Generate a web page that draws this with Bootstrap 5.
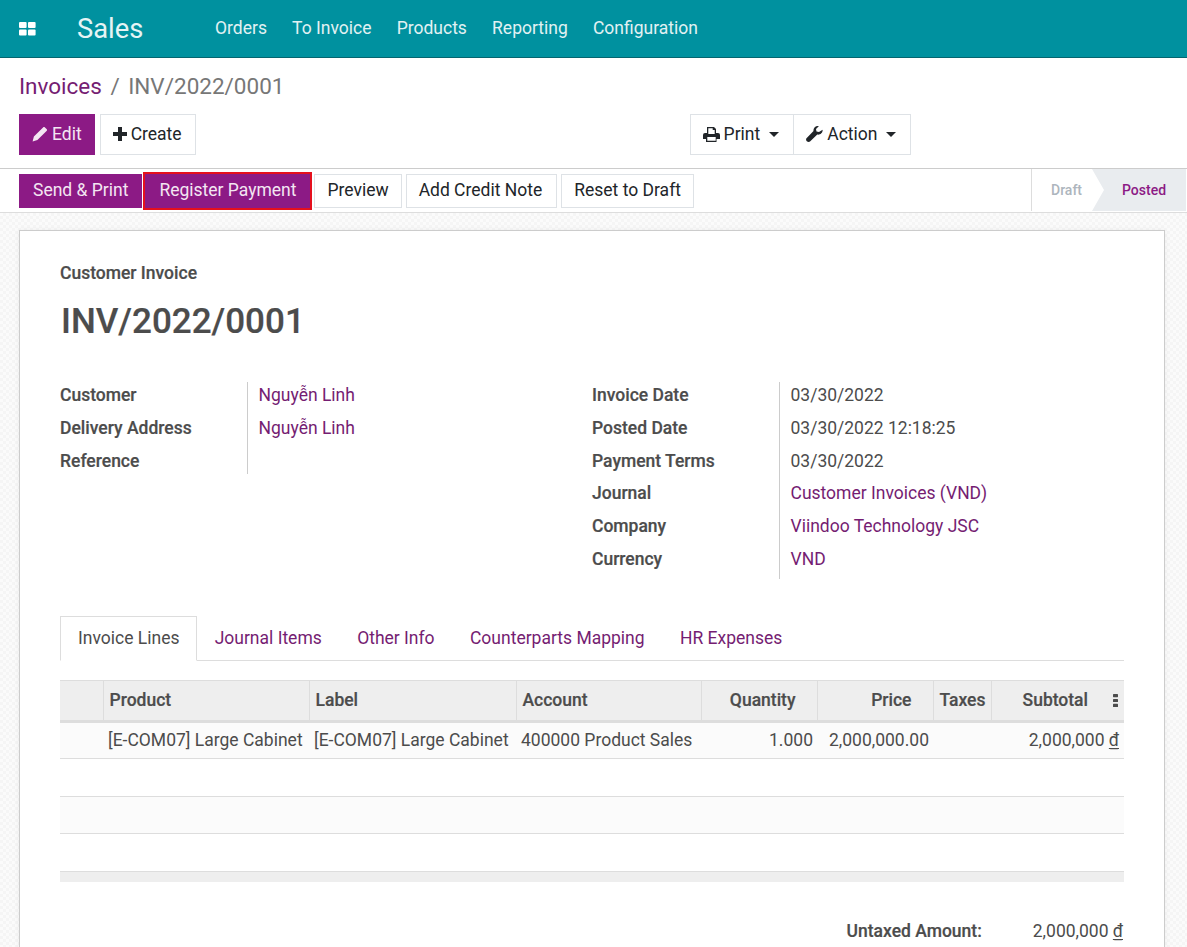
<!DOCTYPE html>
<html lang="en"><head><meta charset="utf-8"><title>INV/2022/0001</title>
<link rel="stylesheet" href="https://cdn.jsdelivr.net/npm/bootstrap@5.3.0/dist/css/bootstrap.min.css">
<style>
html,body{height:947px;overflow:hidden}
body{font-family:Roboto,"Liberation Sans",sans-serif;font-size:17.5px;line-height:1.5;color:#4c4c4c;background:#fff}
a{color:#751d72;text-decoration:none}
.topbar{height:58px;background:#00919f;border-bottom:1px solid #05656f;color:#fff;padding-left:19px}
.appname{font-size:27.3px;margin-left:41px;width:138px;color:#e6f4f5;padding-top:1px}
.topbar .menu-item{color:#e2f1f3;margin-right:25.2px}
.crumbs{font-size:22.5px;line-height:28px;padding:14px 19px 0;color:#777}
.crumbs .sep{margin:0 8.500px}
.btnrow{padding:14px 19px 13px;height:68px}
.xbtn{font-size:17.5px;line-height:24px;border-radius:0;padding:7px 12px 8px;background:#fff;border:1px solid #dee2e6;color:#212529;white-space:nowrap;display:inline-flex;align-items:center;gap:4px}
.xbtn.prim{background:#8c1a85;border-color:#8c1a85;color:#f3e6f2}
.xbtn svg{flex:none}
.createx{margin-left:1px;padding-right:13px}
.printgrp{margin-left:494px}
.printgrp .xbtn+.xbtn{margin-left:-1px}
.caretx{display:inline-block;width:0;height:0;border-top:5px solid #212529;border-left:5.5px solid transparent;border-right:5.5px solid transparent;margin-left:5px;margin-right:2px}
.statusrow{height:45px;border-top:1px solid #ccc;border-bottom:1px solid #ddd;padding:5px 0 0 19px;position:relative}
.statusrow .xbtn{padding:2px 12px 5px;height:34px}
.statusrow .prim{padding:2px 13px 5px}
.redbox{outline:2px solid #e5101d;outline-offset:0;margin-left:3px;margin-right:4px}
.addnote{padding-right:13.500px!important;margin-right:4.500px}
.status-steps{margin-left:auto;height:42px;margin-top:-5px;font-size:14px;font-weight:500;border-left:1px solid #ddd}
.step-draft{color:#adb5bd;padding:0 10px 0 19px;line-height:42px;width:60px}
.step-posted{color:#8c1a85;background:#e9ecef;line-height:42px;width:94px;padding-left:30px;margin-right:1px;clip-path:polygon(0 0,100% 0,100% 100%,0 100%,12px 50%)}
.sheetbg{height:734px;padding:17px 22px 0 19px;background-color:#fbfbfb;background-image:conic-gradient(#f5f5f5 25%,#fbfbfb 0 50%,#f5f5f5 0 75%,#fbfbfb 0);background-size:6px 6px;overflow:hidden}
.sheet{background:#fff;border:1px solid #ccc;height:760px;padding:27px 40px 0;box-shadow:0 0 6px rgba(0,0,0,.06)}
.boldx{font-weight:500;-webkit-text-stroke:.2px currentColor}
.subt{line-height:30px}
.invnum{font-size:35px;line-height:48px;margin:10px 0 33px;padding-left:1px}
.gl{white-space:nowrap;width:188px;height:32.8px;line-height:32.8px}
.gv{padding-left:10.500px;height:32.8px;line-height:32.8px;white-space:nowrap}
.groupcol{position:relative}
.groupcol::after{content:"";position:absolute;left:187px;top:3px;width:1px;background:#ccc}
.grp-left{width:532px}
.grp-left::after{bottom:3.400px}
.grp-right{flex:1}
.grp-right::after{bottom:-3px}
.tabsx{border-bottom:1px solid #ddd;height:45px;margin-top:40px}
.tabsx .tabx{padding:0 17.200px;line-height:43px;height:45px;border:1px solid transparent;white-space:nowrap}
.tabsx .on{color:#4c4c4c;border-color:#ddd #ddd #fff;background:#fff;padding:0 17px}
.tabsx .tabx+.tabx{margin-left:-1px}
.linesx{width:1064px;table-layout:fixed;border-collapse:collapse;margin-top:19px;white-space:nowrap}
.linesx th{height:41px;background:#eee;border-top:1px solid #ddd;border-bottom:3px solid #ddd;border-left:1px solid #ddd;padding:0 5px 0 6px;line-height:1}
.linesx th:first-child{border-left:0}
.linesx td{height:37.5px;padding:0 4px 0 5px;border-bottom:1px solid #ddd;overflow:hidden}
.linesx tbody tr:nth-child(odd) td{background:#fbfbfb}
.linesx th.endx,.linesx td.endx{text-align:right}
.linesx td.subcell{padding-right:5px}
.linesx tfoot td{height:11px;background:#eee;border:0;padding:0}
.cur{text-decoration:underline;text-underline-offset:2px}
.totals{justify-content:flex-end;margin-top:37px;line-height:24px;padding-right:1px;margin-left:-1px}
.tval{margin-left:51px}
.hd-qty{padding-right:21px!important}
.hd-sub{gap:25px;padding-right:1px}
</style></head><body>
<nav class="topbar d-flex align-items-center">
<svg width="17" height="14" viewBox="0 0 17 14" fill="#fff"><rect width="7.6" height="6" rx="1"/><rect x="9" width="7.6" height="6" rx="1"/><rect y="7.6" width="7.6" height="6" rx="1"/><rect x="9" y="7.6" width="7.6" height="6" rx="1"/></svg>
<span class="appname">Sales</span>
<span class="menu-item">Orders</span><span class="menu-item">To Invoice</span><span class="menu-item">Products</span><span class="menu-item">Reporting</span><span class="menu-item">Configuration</span>
</nav>
<div class="crumbs"><a href="#">Invoices</a><span class="sep">/</span>INV/2022/0001</div>
<div class="btnrow d-flex">
<button class="xbtn prim me-1"><svg width="16" height="16" viewBox="0 0 16 16" fill="#f3e6f2"><path d="M11.3 1.2 1.9 10.6.6 15.4l4.8-1.3 9.4-9.4c.4-.4.4-1 0-1.4l-2.1-2.1c-.4-.4-1-.4-1.4 0z"/></svg>Edit</button>
<button class="xbtn createx"><svg width="14" height="14" viewBox="0 0 14 14" fill="#212529"><path d="M5 0h4v5h5v4H9v5H5V9H0V5h5z"/></svg>Create</button>
<div class="printgrp d-flex">
<button class="xbtn"><svg width="17" height="15" viewBox="0 0 17 15" fill="#212529"><path d="M4 0h7l2 2v4h2a2 2 0 0 1 2 2v4h-3.500v3H3v-3H0V8a2 2 0 0 1 2-2h2zm1.300 1.300V7h6.400V3h-2V1.300zM4.300 10v3.700h8.400V10z" fill-rule="evenodd"/></svg>Print <span class="caretx"></span></button>
<button class="xbtn"><svg width="17" height="16" viewBox="0 0 17 16" fill="#212529"><path d="M16.600 3.800c.3 2.700-2.300 5.400-5.300 4.800L4 15.500c-.7.700-2.400.5-3.200-.3-.8-.8-1-2.300-.3-3L7.500 5C7 2.300 9.700-.5 12.800.2L10 3l.5 2.500 2.500.6z"/></svg>Action <span class="caretx"></span></button>
</div></div>
<div class="statusrow d-flex">
<button class="xbtn prim">Send &amp; Print</button>
<button class="xbtn prim redbox">Register Payment</button>
<button class="xbtn me-1">Preview</button><button class="xbtn addnote">Add Credit Note</button><button class="xbtn">Reset to Draft</button>
<div class="status-steps d-flex"><span class="step-draft">Draft</span><span class="step-posted">Posted</span></div>
</div>
<div class="sheetbg"><div class="sheet">
<div class="subt boldx">Customer Invoice</div>
<div class="invnum boldx">INV/2022/0001</div>
<div class="d-flex">
<div class="groupcol grp-left align-self-start"><div class="d-flex"><div class="gl boldx">Customer</div><div class="gv"><a href="#">Nguyễn Linh</a></div></div>
<div class="d-flex"><div class="gl boldx">Delivery Address</div><div class="gv"><a href="#">Nguyễn Linh</a></div></div>
<div class="d-flex"><div class="gl boldx">Reference</div><div class="gv"></div></div></div>
<div class="groupcol grp-right"><div class="d-flex"><div class="gl boldx">Invoice Date</div><div class="gv">03/30/2022</div></div>
<div class="d-flex"><div class="gl boldx">Posted Date</div><div class="gv">03/30/2022 12:18:25</div></div>
<div class="d-flex"><div class="gl boldx">Payment Terms</div><div class="gv">03/30/2022</div></div>
<div class="d-flex"><div class="gl boldx">Journal</div><div class="gv"><a href="#">Customer Invoices (VND)</a></div></div>
<div class="d-flex"><div class="gl boldx">Company</div><div class="gv"><a href="#">Viindoo Technology JSC</a></div></div>
<div class="d-flex"><div class="gl boldx">Currency</div><div class="gv"><a href="#">VND</a></div></div></div>
</div>
<div class="tabsx d-flex"><span class="tabx on">Invoice Lines</span><a class="tabx" href="#">Journal Items</a><a class="tabx" href="#">Other Info</a><a class="tabx" href="#">Counterparts Mapping</a><a class="tabx" href="#">HR Expenses</a></div>
<table class="linesx">
<colgroup><col style="width:43px"><col style="width:206px"><col style="width:207px"><col style="width:185px"><col style="width:116px"><col style="width:116px"><col style="width:58px"><col style="width:133px"></colgroup>
<thead class="boldx"><tr><th></th><th class="boldx">Product</th><th class="boldx">Label</th><th class="boldx">Account</th><th class="endx hd-qty boldx">Quantity</th><th class="endx hd-qty boldx">Price</th><th class="boldx">Taxes</th><th class="endx boldx"><span class="d-flex justify-content-end align-items-center hd-sub">Subtotal<svg width="5" height="13" viewBox="0 0 5 13" fill="#4c4c4c"><rect width="5" height="3.200" rx=".6"/><rect y="4.900" width="5" height="3.200" rx=".6"/><rect y="9.800" width="5" height="3.200" rx=".6"/></svg></span></th></tr></thead>
<tbody>
<tr><td></td><td>[E-COM07] Large Cabinet</td><td>[E-COM07] Large Cabinet</td><td>400000 Product Sales</td><td class="endx">1.000</td><td class="endx">2,000,000.00</td><td></td><td class="endx subcell">2,000,000 <span class="cur">₫</span></td></tr>
<tr><td colspan="8"></td></tr><tr><td colspan="8"></td></tr><tr><td colspan="8"></td></tr>
</tbody>
<tfoot><tr><td colspan="8"></td></tr></tfoot>
</table>
<div class="totals d-flex"><span class="boldx">Untaxed Amount:</span><span class="tval">2,000,000 <span class="cur">₫</span></span></div>
</div></div>
</body></html>
